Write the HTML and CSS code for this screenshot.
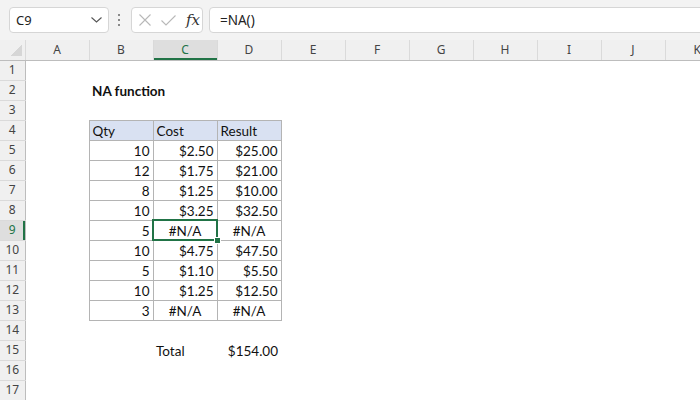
FILE: index.html
```html
<!DOCTYPE html>
<html lang="en">
<head>
    <meta charset="UTF-8">
    <title>NA function</title>
    <link rel="stylesheet" href="styles.css">
</head>
<body>
    <div class="bar">
        <div class="namebox">
            <span>C9</span>
            <svg class="chev" width="11" height="6" viewBox="0 0 11 6"><path d="M0.5 0.5 L5.5 5 L10.5 0.5" fill="none" stroke="#555" stroke-width="1.1"/></svg>
        </div>
        <div class="dots"><i></i><i></i><i></i></div>
        <div class="iconbox">
            <svg width="14" height="12" viewBox="0 0 14 12"><path d="M1.5 0.5 L12.5 11.5 M12.5 0.5 L1.5 11.5" stroke="#b8b8b8" stroke-width="1.1"/></svg>
            <svg width="15" height="11" viewBox="0 0 15 11"><path d="M0.5 5.5 L5 10 L14.5 0.5" fill="none" stroke="#b8b8b8" stroke-width="1.1"/></svg>
            <span class="fx">fx</span>
        </div>
        <div class="formula">=NA()</div>
    </div>

    <table class="sheet">
        <colgroup>
            <col class="rh">
            <col><col><col><col><col><col><col><col><col><col><col>
        </colgroup>
        <thead>
            <tr>
                <th class="corner"></th>
                <th>A</th><th>B</th><th class="on">C</th><th>D</th><th>E</th><th>F</th><th>G</th><th>H</th><th>I</th><th>J</th><th>K</th>
            </tr>
        </thead>
        <tbody>
            <tr><th>1</th><td colspan="11"></td></tr>
            <tr><th>2</th><td></td><td class="title" colspan="3">NA function</td><td colspan="7"></td></tr>
            <tr><th>3</th><td colspan="11"></td></tr>
            <tr><th>4</th><td></td><td class="b hd">Qty</td><td class="b hd">Cost</td><td class="b hd">Result</td><td colspan="7"></td></tr>
            <tr><th>5</th><td></td><td class="b n">10</td><td class="b n">$2.50</td><td class="b n">$25.00</td><td colspan="7"></td></tr>
            <tr><th>6</th><td></td><td class="b n">12</td><td class="b n">$1.75</td><td class="b n">$21.00</td><td colspan="7"></td></tr>
            <tr><th>7</th><td></td><td class="b n">8</td><td class="b n">$1.25</td><td class="b n">$10.00</td><td colspan="7"></td></tr>
            <tr><th>8</th><td></td><td class="b n">10</td><td class="b n">$3.25</td><td class="b n">$32.50</td><td colspan="7"></td></tr>
            <tr><th class="on">9</th><td></td><td class="b n">5</td><td class="b e sel">#N/A</td><td class="b e">#N/A</td><td colspan="7"></td></tr>
            <tr><th>10</th><td></td><td class="b n">10</td><td class="b n">$4.75</td><td class="b n">$47.50</td><td colspan="7"></td></tr>
            <tr><th>11</th><td></td><td class="b n">5</td><td class="b n">$1.10</td><td class="b n">$5.50</td><td colspan="7"></td></tr>
            <tr><th>12</th><td></td><td class="b n">10</td><td class="b n">$1.25</td><td class="b n">$12.50</td><td colspan="7"></td></tr>
            <tr><th>13</th><td></td><td class="b n">3</td><td class="b e">#N/A</td><td class="b e">#N/A</td><td colspan="7"></td></tr>
            <tr><th>14</th><td colspan="11"></td></tr>
            <tr><th>15</th><td></td><td></td><td>Total</td><td class="n">$154.00</td><td colspan="7"></td></tr>
            <tr><th>16</th><td colspan="11"></td></tr>
            <tr><th>17</th><td colspan="11"></td></tr>
        </tbody>
    </table>
</body>
</html>
```

FILE: styles.css
```css
body {
    margin: 0;
    background-color: #ffffff;
    font-family: 'Lato', 'Liberation Sans', sans-serif;
    overflow: hidden;
}
.bar {
    display: flex;
    align-items: flex-start;
    height: 40px;
    box-sizing: border-box;
    padding: 7px 0 0 9px;
    background-color: #f3f3f3;
}
.namebox {
    display: flex;
    align-items: center;
    justify-content: space-between;
    width: 100px;
    height: 26px;
    box-sizing: border-box;
    padding: 0 6px 0 6px;
    background-color: #ffffff;
    border: 1px solid #d6d6d6;
    border-radius: 4px;
    font-family: 'Noto Sans', sans-serif;
    font-size: 13px;
    color: #222222;
}
.dots {
    display: flex;
    flex-direction: column;
    align-items: center;
    justify-content: center;
    gap: 3px;
    width: 20px;
    height: 26px;
    margin-right: 2px;
}
.dots i {
    display: block;
    width: 2px;
    height: 2px;
    background-color: #8a8a8a;
}
.iconbox {
    display: flex;
    align-items: center;
    gap: 9px;
    width: 72px;
    height: 26px;
    box-sizing: border-box;
    padding-left: 6px;
    margin-right: 6px;
    background-color: #ffffff;
    border: 1px solid #d6d6d6;
    border-radius: 4px;
}
.fx {
    font-family: 'DejaVu Serif', 'Liberation Serif', serif;
    font-style: italic;
    font-size: 15px;
    color: #333333;
    margin-left: 1px;
}
.formula {
    flex: 1;
    height: 26px;
    line-height: 24px;
    box-sizing: border-box;
    padding-left: 10px;
    margin-right: -10px;
    background-color: #ffffff;
    border: 1px solid #d6d6d6;
    border-radius: 4px;
    font-family: 'Noto Sans', sans-serif;
    font-size: 13.5px;
    color: #222222;
}
.sheet {
    border-collapse: collapse;
    table-layout: fixed;
    width: 729px;
    font-size: 13.5px;
    color: #111111;
}
.sheet col {
    width: 64px;
}
.sheet col.rh {
    width: 25px;
}
.sheet tr {
    height: 20px;
}
.sheet th {
    padding: 0;
    background-color: #f0f0f0;
    font-family: 'Noto Sans', sans-serif;
    font-size: 12px;
    font-weight: normal;
    color: #444444;
}
.sheet thead th {
    border-left: 1px solid #dadada;
    border-bottom: 1px solid #bdbdbd;
    line-height: 18px;
}
.sheet thead th.on {
    background-color: #dedede;
    color: #217346;
    box-shadow: inset 0 -2px 0 #217346;
}
.sheet th.corner {
    border-left: none;
    background-image: linear-gradient(to bottom right, transparent 50%, #d6d6d6 50%);
    background-size: 11px 11px;
    background-position: right 3px bottom 4px;
    background-repeat: no-repeat;
}
.sheet tbody th {
    border-right: 1px solid #bdbdbd;
    border-bottom: 1px solid #dadada;
    line-height: 18px;
}
.sheet tbody th.on {
    background-color: #dedede;
    color: #217346;
    box-shadow: inset -2px 0 0 #217346;
}
.sheet td {
    padding: 0 3px 1px 3px;
    vertical-align: bottom;
    line-height: 16px;
    white-space: nowrap;
    overflow: visible;
}
.title {
    font-weight: bold;
}
.b {
    border: 1px solid #b4b4b4;
}
.hd {
    background-color: #d9e1f2;
}
.n {
    text-align: right;
}
.e {
    text-align: center;
}
.sel {
    position: relative;
    outline: 2px solid #217346;
    outline-offset: -1px;
}
.sel::after {
    content: '';
    position: absolute;
    right: -4px;
    bottom: -4px;
    width: 5px;
    height: 5px;
    background-color: #217346;
    border: 1px solid #ffffff;
}
```
